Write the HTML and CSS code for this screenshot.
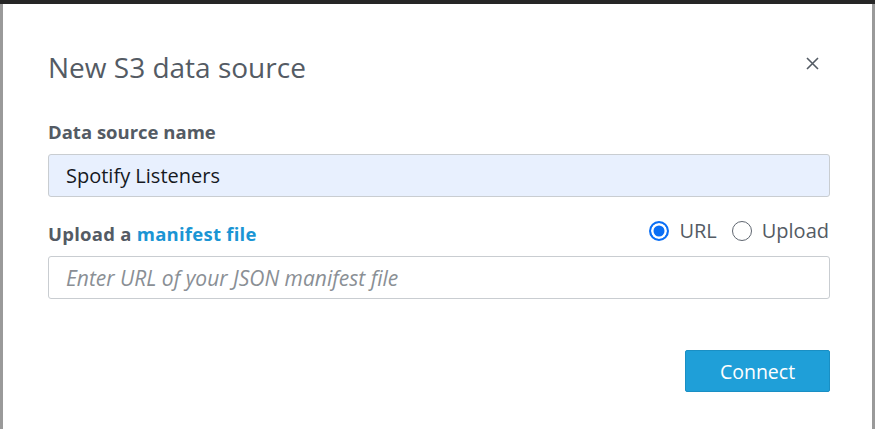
FILE: index.html
```html
<!DOCTYPE html>
<html>
<head>
<meta charset="utf-8">
<link rel="stylesheet" href="styles.css">
</head>
<body>
<div class="backdrop">
  <div class="modal">
    <div class="header">
      <h1 class="title">New S3 data source</h1>
      <button class="close" aria-label="Close">
        <svg width="13" height="13" viewBox="0 0 13 13"><path d="M1 1L12 12M12 1L1 12" stroke="#545b64" stroke-width="1.6" fill="none"/></svg>
      </button>
    </div>
    <div class="field">
      <label class="label">Data source name</label>
      <div class="input filled">Spotify Listeners</div>
    </div>
    <div class="field second">
      <div class="label-row">
        <label class="label">Upload a <span class="link">manifest file</span></label>
        <div class="radios">
          <span class="radio checked"></span><span class="rlabel">URL</span>
          <span class="radio"></span><span class="rlabel">Upload</span>
        </div>
      </div>
      <div class="input placeholder">Enter URL of your JSON manifest file</div>
    </div>
    <div class="footer">
      <button class="connect">Connect</button>
    </div>
  </div>
</div>
</body>
</html>
```
FILE: styles.css
```css
html, body { margin: 0; padding: 0; }
body { width: 875px; height: 429px; overflow: hidden; background: #9a9a9a; font-family: "Open Sans", "Noto Sans", sans-serif; }
.backdrop { height: 429px; box-sizing: border-box; border-top: 4px solid #262626; padding: 0 3px; }
.modal { background: #fff; height: 100%; box-sizing: border-box; padding: 49px 42px 0 45px; }
.header { display: flex; justify-content: space-between; align-items: flex-start; }
.title { margin: 0; font-weight: 400; font-size: 28px; line-height: 28px; color: #545b64; }
.close { background: none; border: 0; padding: 0; margin: 4px 11px 0 0; width: 13px; height: 13px; display: flex; cursor: pointer; }
.field { margin-top: 41px; }
.label { display: block; font-weight: 700; font-size: 18.5px; color: #545b64; line-height: 20px; }
.label-row .label { letter-spacing: 0.25px; }
.link { color: #1a95d4; }
.input { margin-top: 12px; height: 43px; box-sizing: border-box; border: 1px solid #c9cdd1; border-radius: 3px; padding: 0 17px; display: flex; align-items: center; font-size: 20px; }
.filled { background: #e8f0fe; color: #16191f; }
.placeholder { background: #fff; color: #8a8f95; font-style: italic; font-size: 21px; }
.second { margin-top: 27px; }
.label-row { display: flex; justify-content: space-between; align-items: flex-start; height: 20px; }
.radios { display: flex; align-items: center; height: 20px; margin-top: -3px; font-size: 20px; line-height: 20px; color: #545b64; }
.radio { width: 20px; height: 20px; border: 1.5px solid #5f6670; border-radius: 50%; box-sizing: border-box; margin-right: 10px; display: inline-block; }
.radio.checked { border: 2px solid #0b6ff5; background: #0b6ff5; box-shadow: inset 0 0 0 2.5px #fff; }
.rlabel { margin-right: 15px; }
.rlabel:last-child { margin-right: 1px; }
.footer { display: flex; justify-content: flex-end; margin-top: 51px; }
.connect { width: 145px; height: 42px; background: #1f9fd8; color: #fff; border: 1px solid #1a8fc4; border-radius: 2px; font-family: inherit; font-size: 19.5px; font-weight: 500; cursor: pointer; }
```
